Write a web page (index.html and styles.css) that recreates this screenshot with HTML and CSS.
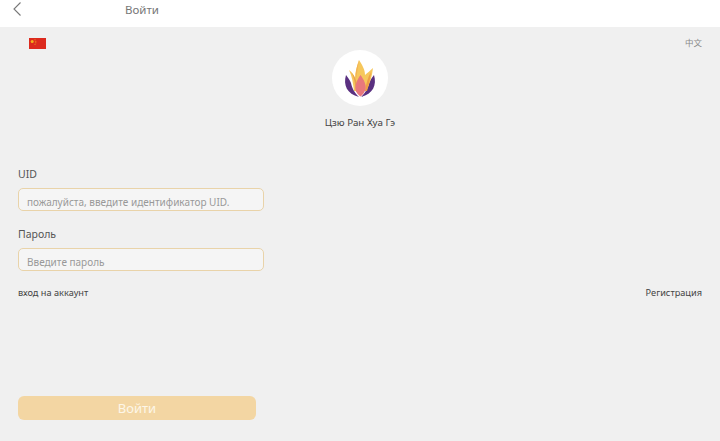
FILE: index.html
```html
<!DOCTYPE html>
<html lang="ru">
<head>
<meta charset="utf-8">
<title>Войти</title>
<link rel="stylesheet" href="styles.css">
</head>
<body>
<header class="topbar">
  <svg class="back" width="10" height="16" viewBox="0 0 10 16"><path d="M8.5 1.5 2 8l6.5 6.5" fill="none" stroke="#777" stroke-width="1.1"/></svg>
  <span class="title">Войти</span>
</header>
<main class="page">
  <div class="lang-row">
    <svg class="flag" width="17" height="11" viewBox="0 0 17 11"><rect width="17" height="11" fill="#dc2a1e"/><circle cx="3.2" cy="3.4" r="1.5" fill="#f3b01c"/><circle cx="6" cy="1.8" r=".5" fill="#f3b01c"/><circle cx="6.8" cy="3.2" r=".5" fill="#f3b01c"/><circle cx="6.8" cy="4.8" r=".5" fill="#f3b01c"/><circle cx="6" cy="6.2" r=".5" fill="#f3b01c"/></svg>
    <span class="lang">中文</span>
  </div>
  <div class="brand">
    <div class="logo">
      <svg width="40" height="48" viewBox="0 -1 40 48">
        <path d="M6 20C3 30 7 39 19 42 14 37 12 33 11 28 10 25 8 23 6 20Z" fill="#5a3080"/>
        <path d="M34 20C37 30 33 39 21 42 26 37 28 33 29 28 30 25 32 23 34 20Z" fill="#5a3080"/>
        <path d="M9 15C12 17 14 20 15 23 15 17 17 11 19 5 22 10 25 14 25 20 27 18 30 16 33 13 32 21 30 29 26 36L14 36C13 28 12 21 9 15Z" fill="#f6c75c"/>
        <path d="M11 17C14 21 15 28 16 37L18 37C18 28 15 21 11 17Z" fill="#e8a050"/>
        <path d="M19 5C17 11 15 18 16 24 17 19 18 12 19 5Z" fill="#f2b254"/>
        <path d="M31 17C28 22 26 29 25 36L27 36C29 30 30 24 31 17Z" fill="#ee9f45"/>
        <path d="M20.5 20C24 25 26.500 30 25.500 34 24.500 38 22.500 40 20.500 41.500 18.500 40 16 38 15.500 34 15 30 17 25 20.500 20Z" fill="#e9787c"/>
      </svg>
    </div>
    <div class="name">Цзю Ран Хуа Гэ</div>
  </div>
  <form class="form">
    <label class="label">UID</label>
    <div class="field"><span class="placeholder">пожалуйста, введите идентификатор UID.</span></div>
    <label class="label label-second">Пароль</label>
    <div class="field"><span class="placeholder">Введите пароль</span></div>
  </form>
  <div class="links">
    <span>вход на аккаунт</span>
    <span>Регистрация</span>
  </div>
  <button class="submit" type="button">Войти</button>
</main>
</body>
</html>
```
FILE: styles.css
```css
* { box-sizing: border-box; }
html, body { margin: 0; height: 441px; overflow: hidden; }
body { background: #f0f0f0; font-family: "Noto Sans", "Noto Sans CJK SC", sans-serif; color: #333; }
.topbar { height: 27px; background: #fff; display: flex; align-items: flex-start; padding-left: 12px; }
.back { margin-top: 1px; }
.title { margin-left: 103px; margin-top: 1px; font-size: 11.5px; line-height: 17px; color: #777; }
.page { padding: 0 18px; display: flex; flex-direction: column; }
.lang-row { display: flex; justify-content: space-between; align-items: flex-start; padding: 11px 0 0 11px; height: 23px; }
.lang { font-size: 8.500px; line-height: 10px; color: #888; }
.brand { display: flex; flex-direction: column; align-items: center; }
.logo { width: 56px; height: 56px; border-radius: 50%; background: #fff; display: flex; align-items: center; justify-content: center; }
.name { margin-top: 10px; font-size: 9.8px; line-height: 14px; color: #444; }
.form { display: flex; flex-direction: column; margin-top: 37px; }
.label { font-size: 10.5px; line-height: 15px; color: #555; }
.label-second { margin-top: 16px; }
.field { width: 246px; height: 23px; margin-top: 6px; border: 1px solid #e9d3a9; border-radius: 5px; background: #f5f5f5; padding: 5px 0 0 8px; }
.placeholder { display: block; font-size: 10px; line-height: 16px; color: #999; }
.links { display: flex; justify-content: space-between; margin-top: 15px; font-size: 9.2px; line-height: 13px; color: #444; }
.submit { width: 238px; height: 24px; margin-top: 97px; padding: 0; border: 0; border-radius: 6px; background: #f3d6a3; color: #fdf6e8; font-family: inherit; font-size: 13px; line-height: 24px; }
```
